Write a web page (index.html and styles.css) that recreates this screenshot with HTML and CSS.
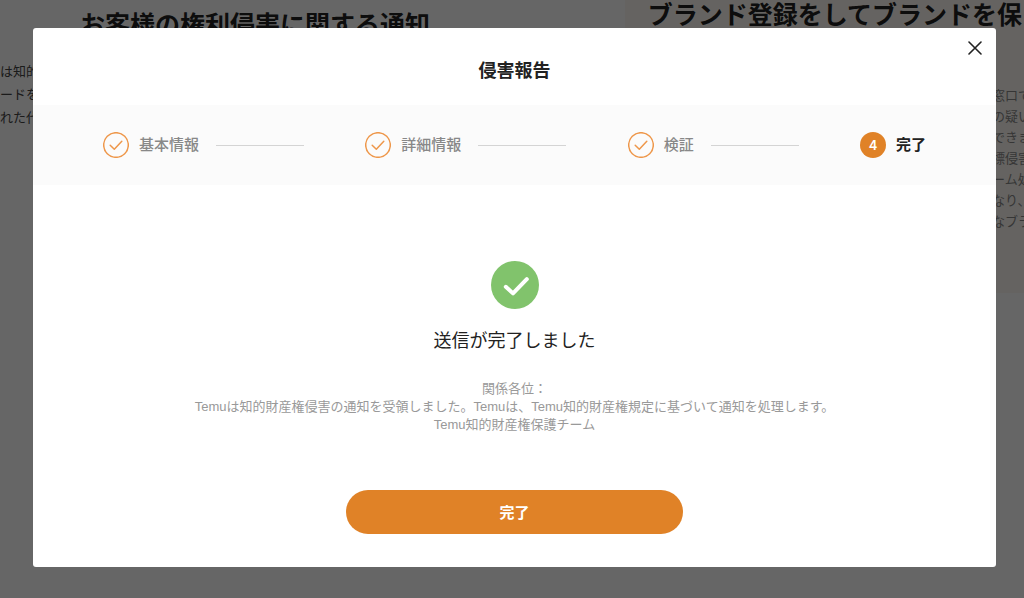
FILE: index.html
```html
<!DOCTYPE html>
<html lang="ja">
<head>
  <meta charset="UTF-8" />
  <meta name="viewport" content="width=device-width, initial-scale=1.0" />
  <title>侵害報告</title>
  <link rel="stylesheet" href="styles.css">
</head>
<body>
  <main class="page">
    <section class="notice">
      <h2>お客様の権利侵害に関する通知</h2>
      <p>は知的<br>ードを<br>れた代</p>
    </section>
    <section class="brand">
      <h2>ブランド登録をしてブランドを保</h2>
      <p>窓口で<br>の疑い<br>できま<br>標侵害<br>ーム処<br>なり、<br>なブラ</p>
    </section>
  </main>

  <div class="overlay">
    <div class="modal" role="dialog" aria-modal="true" aria-labelledby="modalTitle">
      <button class="close" type="button" aria-label="閉じる">
        <svg viewBox="0 0 14 14"><path d="M1 1L13 13M13 1L1 13"/></svg>
      </button>
      <h1 class="modal-title" id="modalTitle">侵害報告</h1>

      <ol class="steps">
        <li class="step">
          <svg class="step-icon" viewBox="0 0 26 26"><circle cx="13" cy="13" r="12.3"/><path d="M7.2 13.2L11.3 17.2L18.8 9.3"/></svg>
          <span>基本情報</span>
          <i class="step-line"></i>
        </li>
        <li class="step">
          <svg class="step-icon" viewBox="0 0 26 26"><circle cx="13" cy="13" r="12.3"/><path d="M7.2 13.2L11.3 17.2L18.8 9.3"/></svg>
          <span>詳細情報</span>
          <i class="step-line"></i>
        </li>
        <li class="step">
          <svg class="step-icon" viewBox="0 0 26 26"><circle cx="13" cy="13" r="12.3"/><path d="M7.2 13.2L11.3 17.2L18.8 9.3"/></svg>
          <span>検証</span>
          <i class="step-line"></i>
        </li>
        <li class="step active" aria-current="step">
          <b class="step-number">4</b>
          <span>完了</span>
        </li>
      </ol>

      <div class="result">
        <svg class="result-icon" viewBox="0 0 48 48">
          <circle cx="24" cy="24" r="24"/>
          <path d="M14.8 25.8L22 32.4L35.8 18.2"/>
        </svg>
        <h2>送信が完了しました</h2>
        <p>関係各位：<br>Temuは知的財産権侵害の通知を受領しました。Temuは、Temu知的財産権規定に基づいて通知を処理します。<br>Temu知的財産権保護チーム</p>
        <button class="done" type="button">完了</button>
      </div>
    </div>
  </div>
</body>
</html>
```
FILE: styles.css
```css
:root {
  --orange: #e08227;
  --green: #81c36c;
  --text-color: #222;
}
* { box-sizing: border-box; }
body {
  margin: 0;
  font-family: 'Liberation Sans', 'Noto Sans CJK JP', sans-serif;
  background: #fff;
  color: var(--text-color);
  overflow: hidden;
}
h1, h2, p { margin: 0; }

/* Page behind the dialog */
.page {
  display: grid;
  grid-template-columns: 61% 39%;
  align-items: start;
  min-height: 100vh;
}
.page h2 {
  font-size: 25px;
  line-height: 30px;
  white-space: nowrap;
}
.page p {
  font-size: 13px;
  white-space: nowrap;
}
.notice { padding-top: 10px; }
.notice h2 { padding-left: 80px; }
.notice p {
  margin-top: 20px;
  line-height: 23px;
  color: #444;
}
.brand {
  background: #fcf8f3;
  padding-bottom: 61px;
}
.brand h2 { padding-left: 23px; }
.brand p {
  margin-top: 55px;
  padding-left: 92%;
  line-height: 21px;
  color: #888;
}

/* Dialog */
.overlay {
  position: fixed;
  inset: 0;
  padding: 28px 28px 28px 33px;
  background: rgba(0, 0, 0, 0.6);
  overflow: auto;
}
.modal {
  position: relative;
  background: #fff;
  border-radius: 3px;
}
.close {
  position: absolute;
  top: 13px;
  right: 14px;
  padding: 0;
  border: none;
  background: none;
  cursor: pointer;
}
.close svg {
  display: block;
  width: 14px;
  height: 14px;
  fill: none;
  stroke: #222;
  stroke-width: 1.6;
  stroke-linecap: round;
}
.modal-title {
  padding: 30px 0 21px;
  font-size: 18px;
  line-height: 26px;
  text-align: center;
}

/* Steps */
.steps {
  display: flex;
  justify-content: space-between;
  margin: 0;
  padding: 27px 70px;
  list-style: none;
  background: #fbfbfb;
}
.step {
  display: flex;
  align-items: center;
  font-size: 15px;
  font-weight: 500;
  line-height: 26px;
  color: #888;
}
.step-icon {
  width: 26px;
  height: 26px;
  margin-right: 10px;
  fill: none;
  stroke: #ee974a;
  stroke-width: 1.5;
  stroke-linecap: round;
  stroke-linejoin: round;
}
.step-line {
  width: 88px;
  height: 1px;
  margin-left: 17px;
  background: #d4d4d4;
}
.step.active {
  color: var(--text-color);
  font-weight: 700;
}
.step-number {
  width: 26px;
  height: 26px;
  margin-right: 10px;
  border-radius: 50%;
  background: var(--orange);
  color: #fff;
  font-family: Inter, sans-serif;
  font-size: 13px;
  font-weight: 600;
  text-align: center;
}

/* Result */
.result {
  display: flex;
  flex-direction: column;
  align-items: center;
  padding: 76px 0 33px;
  text-align: center;
}
.result-icon {
  width: 48px;
  height: 48px;
  fill: var(--green);
}
.result-icon path {
  fill: none;
  stroke: #fff;
  stroke-width: 4;
  stroke-linecap: round;
  stroke-linejoin: round;
}
.result h2 {
  margin-top: 19px;
  font-size: 18px;
  font-weight: 400;
  line-height: 26px;
}
.result p {
  margin-top: 26px;
  font-size: 13px;
  line-height: 18px;
  color: #999;
}
.done {
  width: 35%;
  height: 44px;
  margin-top: 56px;
  padding: 0 0 2px;
  border: none;
  border-radius: 22px;
  background: var(--orange);
  color: #fff;
  font-family: inherit;
  font-size: 15px;
  font-weight: 700;
  cursor: pointer;
}
```
